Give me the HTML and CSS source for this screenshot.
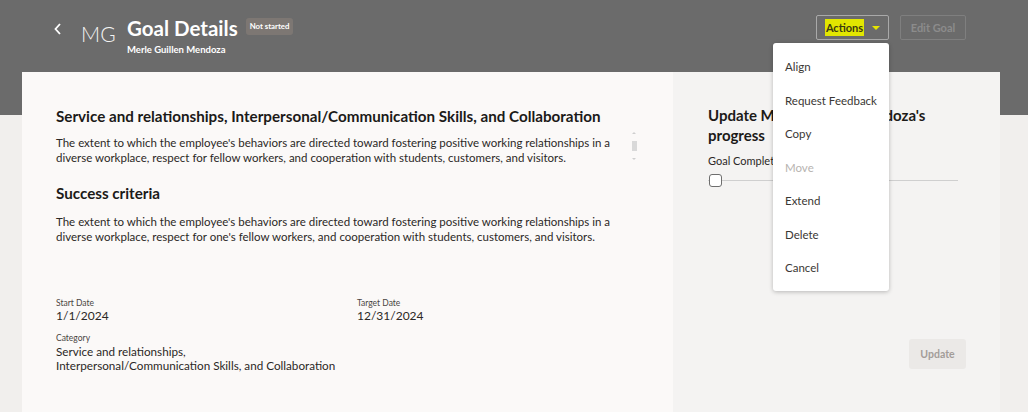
FILE: index.html
```html
<!DOCTYPE html>
<html>
<head>
<meta charset="utf-8">
<link rel="stylesheet" href="styles.css">
</head>
<body>
<div class="page">
  <header class="topbar">
    <div class="back">
      <svg width="10" height="14" viewBox="0 0 10 14"><path d="M7 2 L2.5 7 L7 12" fill="none" stroke="#fff" stroke-width="1.8"/></svg>
    </div>
    <div class="avatar">MG</div>
    <div class="titles">
      <div class="title-row">
        <h1 class="title">Goal Details</h1>
        <span class="badge">Not started</span>
      </div>
      <div class="subtitle">Merle Guillen Mendoza</div>
    </div>
    <div class="actions">
      <button class="btn btn-actions"><span class="hl">Actions</span><span class="caret"></span></button>
      <button class="btn btn-edit">Edit Goal</button>
    </div>
  </header>
  <main class="card">
    <section class="left">
      <div class="desc-block">
        <h2 class="h2">Service and relationships, Interpersonal/Communication Skills, and Collaboration</h2>
        <p class="text">The extent to which the employee's behaviors are directed toward fostering positive working relationships in a diverse workplace, respect for fellow workers, and cooperation with students, customers, and visitors.</p>
        <div class="scroll"><span class="up"></span><span class="thumb"></span><span class="down"></span></div>
      </div>
      <h2 class="h2 h2-second">Success criteria</h2>
      <p class="text text-second">The extent to which the employee's behaviors are directed toward fostering positive working relationships in a diverse workplace, respect for one's fellow workers, and cooperation with students, customers, and visitors.</p>
      <div class="fields">
        <div class="field">
          <div class="label">Start Date</div>
          <div class="value">1/1/2024</div>
        </div>
        <div class="field">
          <div class="label">Target Date</div>
          <div class="value">12/31/2024</div>
        </div>
        <div class="field wide">
          <div class="label">Category</div>
          <div class="value cat">Service and relationships,<br>Interpersonal/Communication Skills, and Collaboration</div>
        </div>
      </div>
    </section>
    <section class="right">
      <h2 class="h3">Update Merle Guillen Mendoza's progress</h2>
      <div class="gc-label">Goal Completion</div>
      <div class="slider"><span class="knob"></span></div>
      <div class="update-row"><button class="btn-update">Update</button></div>
    </section>
  </main>
  <ul class="menu">
    <li>Align</li>
    <li>Request Feedback</li>
    <li>Copy</li>
    <li class="disabled">Move</li>
    <li>Extend</li>
    <li>Delete</li>
    <li>Cancel</li>
  </ul>
</div>
</body>
</html>
```
FILE: styles.css
```css
html, body { margin: 0; padding: 0; }
body {
  font-family: Lato, "Noto Sans", sans-serif;
  color: #1f1c1a;
  background: #f1efed;
  overflow: hidden;
}
.page {
  position: relative;
  width: 1028px;
  height: 412px;
  background: linear-gradient(#6b6b6b 0 115px, #f1efed 115px);
}
.topbar {
  height: 72px;
  display: flex;
  align-items: flex-start;
  padding: 0 62px 0 53px;
  box-sizing: border-box;
  color: #fff;
}
.back { margin-top: 20px; width: 12px; }
.avatar {
  margin: 21px 0 0 16px;
  font-size: 21px;
  font-weight: 300;
  letter-spacing: 0.3px;
  color: #f4f4f4;
  width: 46px;
}
.titles { margin-top: 15px; }
.title-row { display: flex; align-items: center; gap: 8px; }
.title { margin: 0; font-size: 20.5px; font-weight: 700; line-height: 26px; }
.badge {
  background: #7d7773;
  border-radius: 3px;
  font-size: 7.8px;
  font-weight: 700;
  line-height: 9px;
  padding: 4px 4px;
  margin-top: -4px;
  color: #fff;
}
.subtitle { font-size: 9.5px; font-weight: 700; margin-top: 3px; }
.actions { margin-left: auto; margin-top: 15px; display: flex; gap: 11px; }
.btn {
  height: 25px;
  border-radius: 2px;
  background: transparent;
  font-family: inherit;
  font-size: 11px;
  font-weight: 700;
  box-sizing: border-box;
  display: flex;
  align-items: center;
  justify-content: center;
}
.btn-actions { width: 73px; border: 1px solid #a9a9a9; gap: 8px; padding: 0; }
.hl { background: #e2e600; color: #3a3a10; padding: 2px 1px; }
.caret {
  width: 0; height: 0;
  border-left: 4px solid transparent;
  border-right: 4px solid transparent;
  border-top: 4px solid #e6e600;
}
.btn-edit { width: 66px; border: 1px solid #7f7f7f; color: #8c8c8c; }
.card {
  margin: 0 28px 0 22px;
  height: 340px;
  display: grid;
  grid-template-columns: 651px 327px;
}
.left { background: #fbf9f8; padding: 34px 40px 0 34px; }
.right { background: #f4f3f2; padding: 33px 42px 0 35px; }
.desc-block { position: relative; }
.h2 { margin: 0; font-size: 15.2px; font-weight: 700; line-height: 20px; color: #1c1a18; }
.h2-second { margin-top: 18px; }
.text { margin: 10px 0 0; font-size: 11.5px; line-height: 14.5px; color: #2b2826; width: 575px; }
.text-second { margin-top: 12px; }
.scroll {
  position: absolute; right: -4px; top: 26px;
  width: 6px; height: 28px;
  display: flex; flex-direction: column; align-items: center; justify-content: space-between;
}
.scroll .up, .scroll .down { width: 0; height: 0; border-left: 2px solid transparent; border-right: 2px solid transparent; }
.scroll .up { border-bottom: 2px solid #cfcfcf; }
.scroll .down { border-top: 2px solid #cfcfcf; }
.scroll .thumb { width: 5px; height: 10px; background: #d9d9d9; }
.fields {
  margin-top: 53px;
  display: grid;
  grid-template-columns: 301px auto;
  row-gap: 9px;
}
.field.wide { grid-column: 1 / span 2; }
.label { font-size: 8.5px; color: #4a4542; line-height: 12px; }
.value { font-size: 12px; color: #2b2826; line-height: 14.5px; }
.value.cat { font-size: 11.7px; }
.field.wide .label { line-height: 11px; }
.h3 { margin: 0; font-size: 15px; font-weight: 700; line-height: 20px; color: #1c1a18; width: 250px; }
.gc-label { margin-top: 9px; font-size: 11px; color: #2b2826; }
.slider { position: relative; margin-top: 13px; height: 1px; background: #cfcfcf; width: 250px; }
.knob {
  position: absolute; left: 1px; top: -6px;
  width: 11px; height: 11px;
  border: 1.5px solid #6e6e6e; border-radius: 3px; background: #fff;
}
.update-row { display: flex; justify-content: flex-end; margin-top: 158px; width: 258px; }
.btn-update {
  width: 57px; height: 30px; border: none; border-radius: 3px;
  background: #ebe9e7; color: #a39d99; font-family: inherit; font-size: 10.5px; font-weight: 700;
}
.menu {
  position: absolute; left: 773px; top: 43px;
  width: 116px; margin: 0; padding: 7px 0 6px; list-style: none;
  background: #fff; border-radius: 3px;
  box-shadow: 0 1px 4px rgba(0,0,0,0.25);
}
.menu li { height: 33.5px; line-height: 33.5px; padding-left: 12px; font-size: 11.5px; color: #3a3734; }
.menu li.disabled { color: #b7b3b0; }
```
